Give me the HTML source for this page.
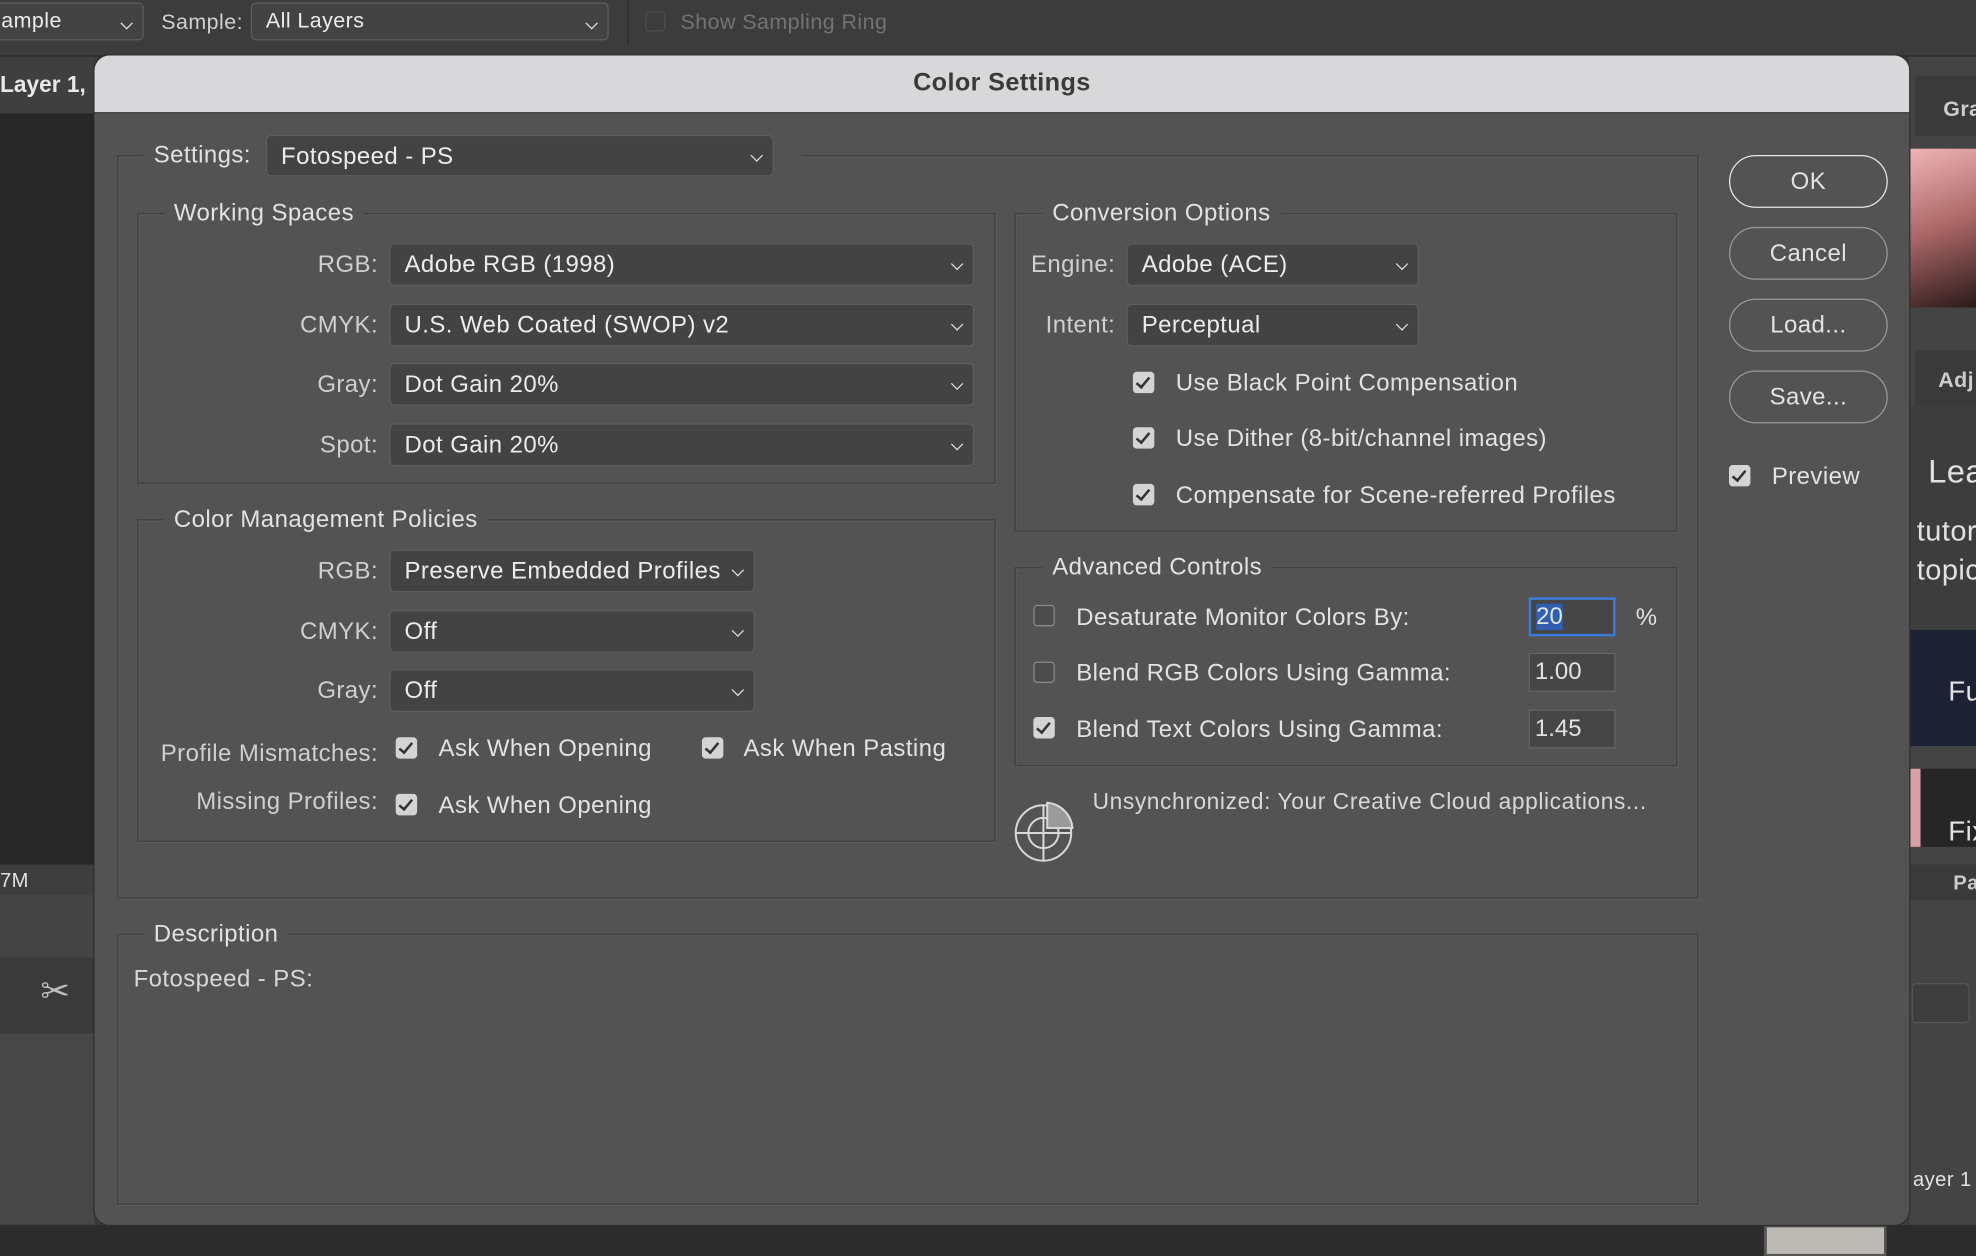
<!DOCTYPE html>
<html><head><meta charset="utf-8"><style>
html,body{margin:0;padding:0;background:#2a2a2a;overflow:hidden}
#root{position:relative;width:1568px;height:997px;transform:scale(1.26020);transform-origin:0 0;font-family:"Liberation Sans",Arial,sans-serif;color:#e2e2e2;background:#3b3b3b}
.a{position:absolute}
.t{position:absolute;white-space:nowrap;font-size:19px;line-height:25px;letter-spacing:0.35px}
.r{text-align:right}
.dd{position:absolute;background:#434343;border:1px solid #5e5e5e;border-radius:4px;box-sizing:border-box;font-size:19px;color:#ececec;padding-left:11px;line-height:34px;white-space:nowrap;letter-spacing:0.35px}
.dd:after{content:"";position:absolute;right:9px;top:12px;width:6px;height:6px;border-right:1.6px solid #ddd;border-bottom:1.6px solid #ddd;transform:rotate(45deg)}
.box{position:absolute;border:1px solid #3f3f3f;box-shadow:inset 1px 1px 0 #5a5a5a,1px 1px 0 #5a5a5a}
.lg{position:absolute;background:#535353;padding:0 8px;font-size:19px;line-height:25px;white-space:nowrap;letter-spacing:0.35px}
.cb{position:absolute;width:17px;height:17px;border-radius:3px;background:#d4d4d4;box-sizing:border-box}
.cb:after{content:"";position:absolute;left:5px;top:1.5px;width:4px;height:9px;border-right:2.4px solid #333;border-bottom:2.4px solid #333;transform:rotate(40deg)}
.cu{position:absolute;width:17px;height:17px;border-radius:3px;border:1.5px solid #8a8a8a;box-sizing:border-box;background:#4c4c4c}
.in{position:absolute;background:#464646;border:1px solid #666;box-sizing:border-box;font-size:19px;padding-left:4px;line-height:30px}
.btn{position:absolute;left:1372px;width:126px;height:42px;border:1.5px solid #cfcfcf;border-radius:21px;box-sizing:border-box;text-align:center;line-height:41px;font-size:19px;letter-spacing:0.35px}
</style></head><body><div id="root">
<div class="a" style="left:0;top:0;width:1568px;height:44px;background:#3c3c3c;border-bottom:1px solid #2a2a2a"></div>
<div class="dd" style="left:-10px;top:2px;width:124px;height:30px;line-height:28px;font-size:17px;padding-left:10px">ample</div>
<div class="t" style="left:128px;top:5px;font-size:17px;color:#d0d0d0">Sample:</div>
<div class="dd" style="left:199px;top:2px;width:284px;height:30px;line-height:28px;font-size:17px">All Layers</div>
<div class="a" style="left:498px;top:0;width:1px;height:36px;background:#2c2c2c"></div>
<div class="a" style="left:512px;top:9px;width:14px;height:14px;border:1px solid #4f4f4f;border-radius:3px"></div>
<div class="t" style="left:540px;top:5px;font-size:17px;color:#737373">Show Sampling Ring</div>
<div class="a" style="left:0;top:45px;width:75px;height:45px;background:#3f3f3f"></div>
<div class="t" style="left:0;top:55px;font-weight:bold;font-size:18px;color:#e8e8e8;letter-spacing:0">Layer 1,</div>
<div class="a" style="left:0;top:90px;width:75px;height:596px;background:#272727"></div>
<div class="a" style="left:0;top:686px;width:75px;height:24px;background:#3e3e3e"></div>
<div class="t" style="left:0;top:687px;font-size:16px">7M</div>
<div class="a" style="left:0;top:710px;width:75px;height:50px;background:#444"></div>
<div class="a" style="left:0;top:760px;width:75px;height:60px;background:#3a3a3a"></div>
<div class="t" style="left:32px;top:774px;font-size:28px;color:#bbb">✂</div>
<div class="a" style="left:0;top:820px;width:75px;height:177px;background:#474747"></div>
<div class="a" style="left:1515px;top:45px;width:53px;height:952px;background:#444"></div>
<div class="a" style="left:1520px;top:60px;width:48px;height:48px;background:#3a3a3a"></div>
<div class="t" style="left:1542px;top:74px;font-weight:bold;font-size:17px;color:#ccc">Gra</div>
<div class="a" style="left:1515px;top:118px;width:53px;height:126px;background:linear-gradient(160deg,#f0b4b6,#a66 50%,#2a1a1a)"></div>
<div class="a" style="left:1520px;top:278px;width:48px;height:44px;background:#3a3a3a"></div>
<div class="t" style="left:1538px;top:289px;font-weight:bold;font-size:17px;color:#ccc">Adj</div>
<div class="a" style="left:1515px;top:322px;width:53px;height:178px;background:#3d3d3d"></div>
<div class="t" style="left:1530px;top:362px;font-size:26px">Lea</div>
<div class="t" style="left:1521px;top:409px;font-size:23px">tutor</div>
<div class="t" style="left:1521px;top:440px;font-size:23px">topic</div>
<div class="a" style="left:1515px;top:500px;width:53px;height:92px;background:#1c2233"></div>
<div class="t" style="left:1546px;top:536px;font-size:22px">Fu</div>
<div class="a" style="left:1515px;top:610px;width:53px;height:62px;background:#262626"></div>
<div class="a" style="left:1515px;top:610px;width:9px;height:62px;background:#d8a0a4"></div>
<div class="t" style="left:1546px;top:647px;font-size:22px">Fix</div>
<div class="a" style="left:1515px;top:686px;width:53px;height:28px;background:#3a3a3a"></div>
<div class="t" style="left:1550px;top:689px;font-weight:bold;font-size:16px;color:#ccc">Pa</div>
<div class="a" style="left:1517px;top:780px;width:44px;height:30px;border:1px solid #555;border-radius:4px;background:#3e3e3e"></div>
<div class="t" style="left:1518px;top:924px;font-size:16px">ayer 1</div>
<div class="a" style="left:0;top:972px;width:1568px;height:25px;background:#2c2c2c"></div>
<div class="a" style="left:1400px;top:972px;width:97px;height:25px;background:#bdb9b5;border:2px solid #555;box-sizing:border-box"></div>
<div class="a" style="left:75px;top:44px;width:1440px;height:928px;background:#535353;border-radius:12px;overflow:hidden;box-shadow:0 0 0 1px #2e2e2e">
 <div class="a" style="left:0;top:0;width:1440px;height:45px;background:#d8d7d9;border-bottom:1px solid #2e2e2e"></div>
 <div class="t" style="left:0;width:1440px;top:10px;text-align:center;font-weight:bold;font-size:20px;color:#3a3a3a;letter-spacing:0.3px">Color Settings</div>
</div>
<div class="box" style="left:93px;top:123px;width:1253px;height:588px"></div>
<div class="lg" style="left:114px;top:111px;width:506px;height:30px"></div>
<div class="t" style="left:122px;top:111px">Settings:</div>
<div class="dd" style="left:211px;top:107px;width:403px;height:33px">Fotospeed - PS</div>
<div class="box" style="left:109px;top:169px;width:679px;height:213px"></div>
<div class="lg" style="left:130px;top:157px">Working Spaces</div>
<div class="t r" style="left:150px;width:150px;top:198px;color:#cfcfcf">RGB:</div>
<div class="dd" style="left:309px;top:193px;width:464px;height:34px">Adobe RGB (1998)</div>
<div class="t r" style="left:150px;width:150px;top:246px;color:#cfcfcf">CMYK:</div>
<div class="dd" style="left:309px;top:241px;width:464px;height:34px">U.S. Web Coated (SWOP) v2</div>
<div class="t r" style="left:150px;width:150px;top:293px;color:#cfcfcf">Gray:</div>
<div class="dd" style="left:309px;top:288px;width:464px;height:34px">Dot Gain 20%</div>
<div class="t r" style="left:150px;width:150px;top:341px;color:#cfcfcf">Spot:</div>
<div class="dd" style="left:309px;top:336px;width:464px;height:34px">Dot Gain 20%</div>
<div class="box" style="left:109px;top:412px;width:679px;height:254px"></div>
<div class="lg" style="left:130px;top:400px">Color Management Policies</div>
<div class="t r" style="left:150px;width:150px;top:441px;color:#cfcfcf">RGB:</div>
<div class="dd" style="left:309px;top:436px;width:290px;height:34px">Preserve Embedded Profiles</div>
<div class="t r" style="left:150px;width:150px;top:489px;color:#cfcfcf">CMYK:</div>
<div class="dd" style="left:309px;top:484px;width:290px;height:34px">Off</div>
<div class="t r" style="left:150px;width:150px;top:536px;color:#cfcfcf">Gray:</div>
<div class="dd" style="left:309px;top:531px;width:290px;height:34px">Off</div>
<div class="t r" style="left:80px;width:220px;top:586px;color:#cfcfcf">Profile Mismatches:</div>
<div class="cb" style="left:314px;top:585px"></div>
<div class="t" style="left:348px;top:582px">Ask When Opening</div>
<div class="cb" style="left:557px;top:585px"></div>
<div class="t" style="left:590px;top:582px">Ask When Pasting</div>
<div class="t r" style="left:80px;width:220px;top:624px;color:#cfcfcf">Missing Profiles:</div>
<div class="cb" style="left:314px;top:630px"></div>
<div class="t" style="left:348px;top:627px">Ask When Opening</div>
<div class="box" style="left:805px;top:169px;width:524px;height:251px"></div>
<div class="lg" style="left:827px;top:157px">Conversion Options</div>
<div class="t r" style="left:770px;width:115px;top:198px;color:#cfcfcf">Engine:</div>
<div class="dd" style="left:894px;top:193px;width:232px;height:34px">Adobe (ACE)</div>
<div class="t r" style="left:770px;width:115px;top:246px;color:#cfcfcf">Intent:</div>
<div class="dd" style="left:894px;top:241px;width:232px;height:34px">Perceptual</div>
<div class="cb" style="left:899px;top:295px"></div>
<div class="t" style="left:933px;top:292px">Use Black Point Compensation</div>
<div class="cb" style="left:899px;top:339px"></div>
<div class="t" style="left:933px;top:336px">Use Dither (8-bit/channel images)</div>
<div class="cb" style="left:899px;top:384px"></div>
<div class="t" style="left:933px;top:381px">Compensate for Scene-referred Profiles</div>
<div class="box" style="left:805px;top:450px;width:524px;height:156px"></div>
<div class="lg" style="left:827px;top:438px">Advanced Controls</div>
<div class="cu" style="left:820px;top:480px"></div>
<div class="t" style="left:854px;top:478px">Desaturate Monitor Colors By:</div>
<div class="in" style="left:1213px;top:474px;width:69px;height:31px;border:2px solid #3d7bd8;line-height:28px"><span style="background:#2f5fae">20</span></div>
<div class="t" style="left:1298px;top:478px">%</div>
<div class="cu" style="left:820px;top:525px"></div>
<div class="t" style="left:854px;top:522px">Blend RGB Colors Using Gamma:</div>
<div class="in" style="left:1213px;top:518px;width:69px;height:31px">1.00</div>
<div class="cb" style="left:820px;top:569px"></div>
<div class="t" style="left:854px;top:567px">Blend Text Colors Using Gamma:</div>
<div class="in" style="left:1213px;top:563px;width:69px;height:31px">1.45</div>
<svg class="a" style="left:803px;top:633px" width="52" height="54" viewBox="0 0 52 54" fill="none" stroke="#d8d8d8" stroke-width="1.6">
<circle cx="25" cy="28" r="22"/><circle cx="25" cy="28" r="12"/><line x1="3" y1="28" x2="47" y2="28"/><line x1="25" y1="6" x2="25" y2="50"/>
<path d="M28 4 A22 22 0 0 1 48 24 L28 24 Z" fill="#9a9a9a"/></svg>
<div class="t" style="left:867px;top:624px;font-size:18px;color:#d8d8d8;letter-spacing:0.5px">Unsynchronized: Your Creative Cloud applications...</div>
<div class="box" style="left:93px;top:741px;width:1253px;height:213px"></div>
<div class="lg" style="left:114px;top:729px">Description</div>
<div class="t" style="left:106px;top:765px;color:#d8d8d8">Fotospeed - PS:</div>
<div class="btn" style="top:123px;border-color:#e8e8e8">OK</div>
<div class="btn" style="top:180px;border-color:#9a9a9a">Cancel</div>
<div class="btn" style="top:237px;border-color:#9a9a9a">Load...</div>
<div class="btn" style="top:294px;border-color:#9a9a9a">Save...</div>
<div class="cb" style="left:1372px;top:369px"></div>
<div class="t" style="left:1406px;top:366px">Preview</div>
</div></body></html>
